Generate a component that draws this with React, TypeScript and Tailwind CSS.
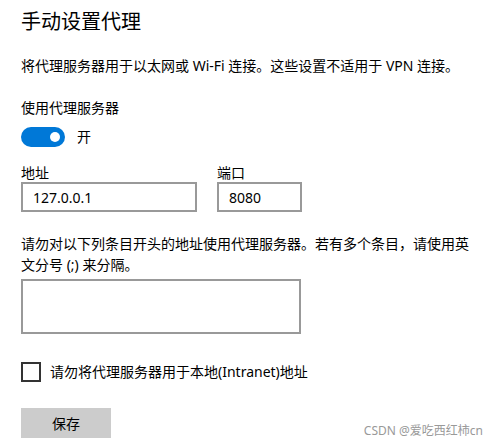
import { useState } from "react";

export default function App() {
  const [enabled, setEnabled] = useState(true);
  const [address, setAddress] = useState("127.0.0.1");
  const [port, setPort] = useState("8080");
  const [exceptions, setExceptions] = useState("");
  const [bypassLocal, setBypassLocal] = useState(false);

  return (
    <div
      className="relative w-[497px] h-[446px] bg-white text-black overflow-hidden"
      style={{ fontFamily: '"Noto Sans", "Noto Sans CJK SC", sans-serif' }}
    >
      <div className="flex flex-col pl-[21px] pt-[8px]">
        <h1 className="text-[20px] leading-[28px] font-normal">手动设置代理</h1>

        <p className="mt-[20px] text-[14px] leading-[20px]">
          将代理服务器用于以太网或 Wi-Fi 连接。这些设置不适用于 VPN 连接。
        </p>

        <p className="mt-[22px] text-[14px] leading-[20px]">使用代理服务器</p>

        <div className="mt-[9px] flex items-center gap-[12px]">
          <button
            type="button"
            onClick={() => setEnabled(!enabled)}
            className={
              enabled
                ? "w-[44px] h-[20px] rounded-full bg-[#0078d7] flex items-center justify-end pr-[5px]"
                : "w-[44px] h-[20px] rounded-full border-2 border-[#333] flex items-center justify-start pl-[3px]"
            }
          >
            <span
              className={
                enabled
                  ? "w-[10px] h-[10px] rounded-full bg-white"
                  : "w-[10px] h-[10px] rounded-full bg-[#333]"
              }
            />
          </button>
          <span className="text-[14px] leading-[20px]">{enabled ? "开" : "关"}</span>
        </div>

        <div className="mt-[17px] flex gap-[20px]">
          <label className="flex flex-col">
            <span className="text-[14px] leading-[18px]">地址</span>
            <input
              value={address}
              onChange={(e) => setAddress(e.target.value)}
              className="w-[176px] h-[30px] border-2 border-[#999] px-[10px] text-[14px] outline-none"
            />
          </label>
          <label className="flex flex-col">
            <span className="text-[14px] leading-[18px]">端口</span>
            <input
              value={port}
              onChange={(e) => setPort(e.target.value)}
              className="w-[85px] h-[30px] border-2 border-[#999] px-[10px] text-[14px] outline-none"
            />
          </label>
        </div>

        <p className="mt-[21px] w-[460px] text-[14px] leading-[21px]">
          请勿对以下列条目开头的地址使用代理服务器。若有多个条目，请使用英文分号 (;) 来分隔。
        </p>

        <textarea
          value={exceptions}
          onChange={(e) => setExceptions(e.target.value)}
          className="mt-[4px] w-[280px] h-[55px] border-2 border-[#999] resize-none outline-none px-[9px] py-[4px] text-[14px]"
        />

        <label className="mt-[28px] flex items-center gap-[9px] cursor-pointer">
          <input
            type="checkbox"
            checked={bypassLocal}
            onChange={(e) => setBypassLocal(e.target.checked)}
            className="appearance-none w-[20px] h-[20px] border-2 border-[#333] bg-white checked:bg-[#0078d7] checked:border-[#0078d7]"
          />
          <span className="text-[14px] leading-[20px]">请勿将代理服务器用于本地(Intranet)地址</span>
        </label>

        <button
          type="button"
          className="mt-[26px] w-[90px] h-[30px] bg-[#cccccc] text-[14px] hover:bg-[#bbbbbb]"
        >
          保存
        </button>
      </div>

      <div className="absolute right-[14px] bottom-[7px] text-[12px] leading-[16px] text-[#999]">
        CSDN @爱吃西红柿cn
      </div>
    </div>
  );
}
